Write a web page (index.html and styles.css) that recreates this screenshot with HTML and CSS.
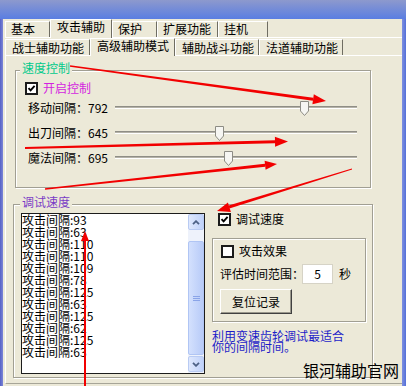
FILE: index.html
```html
<!DOCTYPE html>
<html lang="zh-CN">
<head>
    <meta charset="UTF-8">
    <title>攻击辅助</title>
    <link rel="stylesheet" href="styles.css">
</head>
<body>
    <div class="titlebar"></div>
    <div class="frame">
        <div class="edge edge-left"></div>
        <div class="client">
            <div class="tabs tabs-main">
                <div class="tab w45">基本</div>
                <div class="tab active w62">攻击辅助</div>
                <div class="tab w45">保护</div>
                <div class="tab w61">扩展功能</div>
                <div class="tab w50">挂机</div>
            </div>
            <div class="tabs tabs-sub">
                <div class="tab w85">战士辅助功能</div>
                <div class="tab active w85">高级辅助模式</div>
                <div class="tab w84">辅助战斗功能</div>
                <div class="tab w84">法道辅助功能</div>
            </div>

            <div class="page">
                <fieldset class="group speed">
                    <legend>速度控制</legend>
                    <div class="speed-body">
                        <div class="check magenta">
                            <span class="box"><svg viewBox="0 0 9 9"><path d="M1.5 4.2 L3.6 6.4 L7.6 1.8" fill="none" stroke="#000" stroke-width="1.9"/></svg></span>
                            开启控制
                        </div>
                        <div class="slider-row">
                            <span class="slider-label">移动间隔：792</span>
                            <div class="track"><svg class="thumb" style="left:185px" viewBox="0 0 9 15"><path d="M0.5 0.5 H8.5 V10 L4.5 14.5 L0.5 10 Z" fill="#f6f6f2" stroke="#8d8c84"/></svg></div>
                        </div>
                        <div class="slider-row">
                            <span class="slider-label">出刀间隔：645</span>
                            <div class="track"><svg class="thumb" style="left:100px" viewBox="0 0 9 15"><path d="M0.5 0.5 H8.5 V10 L4.5 14.5 L0.5 10 Z" fill="#f6f6f2" stroke="#8d8c84"/></svg></div>
                        </div>
                        <div class="slider-row">
                            <span class="slider-label">魔法间隔：695</span>
                            <div class="track"><svg class="thumb" style="left:109px" viewBox="0 0 9 15"><path d="M0.5 0.5 H8.5 V10 L4.5 14.5 L0.5 10 Z" fill="#f6f6f2" stroke="#8d8c84"/></svg></div>
                        </div>
                    </div>
                </fieldset>

                <fieldset class="group debug">
                    <legend>调试速度</legend>
                    <div class="debug-body">
                        <div class="listbox">
                            <ul class="items">
                                <li>攻击间隔:93</li>
                                <li>攻击间隔:63</li>
                                <li>攻击间隔:110</li>
                                <li>攻击间隔:110</li>
                                <li>攻击间隔:109</li>
                                <li>攻击间隔:78</li>
                                <li>攻击间隔:125</li>
                                <li>攻击间隔:63</li>
                                <li>攻击间隔:125</li>
                                <li>攻击间隔:62</li>
                                <li>攻击间隔:125</li>
                                <li>攻击间隔:63</li>
                            </ul>
                            <div class="scrollbar">
                                <div class="sb-btn"><svg viewBox="0 0 8 5"><path d="M1 4.2 L4 1.2 L7 4.2" fill="none" stroke="#4d6185" stroke-width="1.8"/></svg></div>
                                <div class="sb-track">
                                    <div class="sb-thumb"><svg viewBox="0 0 7 7"><path d="M0 1.5 H7 M0 3.5 H7 M0 5.5 H7" stroke="#8aa4e8" stroke-width="1"/></svg></div>
                                </div>
                                <div class="sb-btn"><svg viewBox="0 0 8 5"><path d="M1 0.8 L4 3.8 L7 0.8" fill="none" stroke="#4d6185" stroke-width="1.8"/></svg></div>
                            </div>
                        </div>

                        <div class="debug-side">
                            <div class="check">
                                <span class="box"><svg viewBox="0 0 9 9"><path d="M1.5 4.2 L3.6 6.4 L7.6 1.8" fill="none" stroke="#000" stroke-width="1.9"/></svg></span>
                                调试速度
                            </div>
                            <div class="inner-box">
                                <div class="check"><span class="box"></span>攻击效果</div>
                                <div class="range-row">
                                    <span>评估时间范围：</span>
                                    <span class="num-input">5</span>
                                    <span>秒</span>
                                </div>
                                <button class="btn">复位记录</button>
                            </div>
                            <p class="hint">利用变速齿轮调试最适合<br>你的间隔时间。</p>
                        </div>
                    </div>
                </fieldset>
            </div>
        </div>
        <div class="edge edge-right"></div>
    </div>

    <div class="watermark">银河辅助官网</div>

    <!-- red annotation arrows drawn over the window -->
    <svg class="arrows" viewBox="0 0 406 386">
        <g fill="#f20000">
            <polygon points="70.1,65.3 313.3,97.8 312.9,100.7 69.9,66.7"/>
            <polygon points="326,101 312.4,104.2 313.8,94.3"/>
            <polygon points="25,147 275,140.3 275,143.3 25,149"/>
            <polygon points="288,141.5 275.1,146.8 274.9,136.8"/>
            <polygon points="44.9,188.3 264.9,163.8 265.3,166.8 45.1,189.8"/>
            <polygon points="277,164 265.6,169.8 264.6,160.8"/>
            <polygon points="351.9,168.5 228.6,205.6 229.4,208.4 352.1,169.5"/>
            <polygon points="217,211 230.9,212 227.9,202.4"/>
            <rect x="84" y="240" width="2" height="146"/>
            <polygon points="85,231 89,241 81,241"/>
        </g>
    </svg>
</body>
</html>
```

FILE: styles.css
```css
* {
    box-sizing: border-box;
}

body {
    margin: 0;
    width: 406px;
    height: 386px;
    overflow: hidden;
    position: relative;
    background: #ece9d8;
    font-family: "Noto Sans CJK SC", "Noto Sans", sans-serif;
    font-size: 12px;
    color: #000;
}

.titlebar {
    height: 19px;
    background: linear-gradient(to bottom, #8d99cd, #5a7ee2);
}

.frame {
    display: flex;
    height: 367px;
}

.edge {
    flex: none;
}

.edge-left {
    width: 3px;
    background: linear-gradient(to right, #5561c6, #7d86d6);
}

.edge-right {
    width: 4px;
    background: linear-gradient(to right, #7f90e0, #5470d8);
}

.client {
    flex: 1;
    padding-left: 2px;
    display: flex;
    flex-direction: column;
}

/* tab strips */
.tabs {
    flex: none;
    display: flex;
    align-items: flex-end;
    border-bottom: 1px solid #fff;
}

.tabs-main {
    height: 19px;
}

.tabs-sub {
    height: 18px;
}

.tab {
    height: 16px;
    padding-left: 5px;
    line-height: 14px;
    border: 1px solid #fff;
    border-right-color: #6f6d62;
    border-bottom: 0;
    white-space: nowrap;
}

.tabs-sub .tab {
    padding-left: 6px;
    padding-top: 1px;
}

.tab.active {
    position: relative;
    z-index: 1;
    margin-bottom: -1px;
    background: #ece9d8;
}

.tabs-main .tab.active {
    height: 19px;
    padding-left: 6px;
}

.tabs-sub .tab.active {
    height: 18px;
    padding-top: 0;
}

.w45 { width: 45px; }
.w50 { width: 50px; }
.w61 { width: 61px; }
.w62 { width: 62px; }
.w84 { width: 84px; }
.w85 { width: 85px; }

.page {
    flex: none;
    height: 328px;
    border-left: 1px solid #fff;
    border-bottom: 1px solid #a7a598;
}

/* group boxes */
.group {
    margin: 5px 0 0 9px;
    padding: 0;
    min-width: 0;
    width: 356px;
    border: 1px solid #a19f93;
    box-shadow: inset 1px 1px 0 #fff, 1px 1px 0 #fff;
}

.group legend {
    margin-left: 4px;
    padding: 0 2px 4px;
    line-height: 14px;
    background: #ece9d8;
}

.speed legend {
    color: #00c98a;
}

.debug {
    margin: 7px 0 0 7px;
    width: 360px;
}

.debug legend {
    margin-left: 6px;
    color: #7a3cc6;
}

.speed-body {
    padding: 2px 0 17px 9px;
}

.check {
    display: flex;
    align-items: center;
    gap: 5px;
    height: 14px;
    line-height: 14px;
}

.magenta {
    color: #d41fe0;
}

.box {
    flex: none;
    width: 13px;
    height: 13px;
    border: 2px solid #1b1b1b;
    background: #fff;
    display: flex;
    align-items: center;
    justify-content: center;
}

.box svg {
    width: 9px;
    height: 9px;
}

.slider-row {
    display: flex;
    align-items: center;
    height: 25px;
    margin-left: 3px;
}

.slider-label {
    width: 87px;
    line-height: 14px;
    white-space: nowrap;
}

.track {
    position: relative;
    width: 242px;
    height: 3px;
    border-top: 1px solid #8f8e86;
    border-bottom: 1px solid #fff;
    background: #b5b3a8;
}

.thumb {
    position: absolute;
    top: -6px;
    width: 9px;
    height: 15px;
}

/* debug area */
.debug-body {
    display: flex;
    gap: 7px;
    padding: 0 0 3px 7px;
}

.listbox {
    flex: none;
    display: flex;
    width: 184px;
    height: 161px;
    border: 1px solid #1c1c1c;
    background: #fff;
}

.items {
    flex: 1;
    margin: 0;
    padding: 0;
    list-style: none;
    line-height: 12px;
    white-space: nowrap;
}

.scrollbar {
    flex: none;
    width: 16px;
    display: flex;
    flex-direction: column;
    background: #eef2fb;
}

.sb-btn {
    flex: none;
    height: 16px;
    border: 1px solid #b9cbf3;
    border-radius: 2px;
    background: linear-gradient(to right, #dfe8fd, #c0d2fa);
    display: flex;
    align-items: center;
    justify-content: center;
}

.sb-btn:last-child {
    margin-bottom: 1px;
}

.sb-btn svg {
    width: 8px;
    height: 5px;
}

.sb-track {
    flex: 1;
    padding: 11px 0 1px;
}

.sb-thumb {
    height: 100%;
    border: 1px solid #b0c5f4;
    border-radius: 2px;
    background: linear-gradient(to right, #d3e0fd, #b8cbf8);
    display: flex;
    align-items: center;
    justify-content: center;
}

.sb-thumb svg {
    width: 7px;
    height: 7px;
}

.debug-side {
    width: 154px;
}

.debug-side > .check {
    margin: -1px 0 0 6px;
}

.inner-box {
    margin-top: 12px;
    height: 84px;
    padding: 5px 0 0 7px;
    border: 1px solid #a19f93;
    box-shadow: inset 1px 1px 0 #fff, 1px 1px 0 #fff;
}

.inner-box .check {
    margin-left: 1px;
}

.range-row {
    display: flex;
    align-items: center;
    height: 20px;
    margin-top: 6px;
    line-height: 14px;
}

.num-input {
    width: 31px;
    height: 20px;
    margin: 0 6px 0 -2px;
    background: #fff;
    border: 1px solid #d6d3c6;
    text-align: center;
    line-height: 18px;
}

.btn {
    display: block;
    margin-top: 5px;
    width: 72px;
    height: 25px;
    padding: 0;
    font: inherit;
    line-height: 14px;
    color: #000;
    background: #ece9d8;
    border: 1px solid;
    border-color: #fff #404040 #404040 #fff;
    box-shadow: inset -1px -1px 0 #9a988c;
}

.hint {
    margin: 8px 0 0;
    line-height: 11px;
    color: #1c1cc8;
}

.watermark {
    position: absolute;
    left: 303px;
    top: 362px;
    font-size: 16px;
    line-height: 16px;
}

.arrows {
    position: absolute;
    left: 0;
    top: 0;
    width: 406px;
    height: 386px;
    pointer-events: none;
}
```
